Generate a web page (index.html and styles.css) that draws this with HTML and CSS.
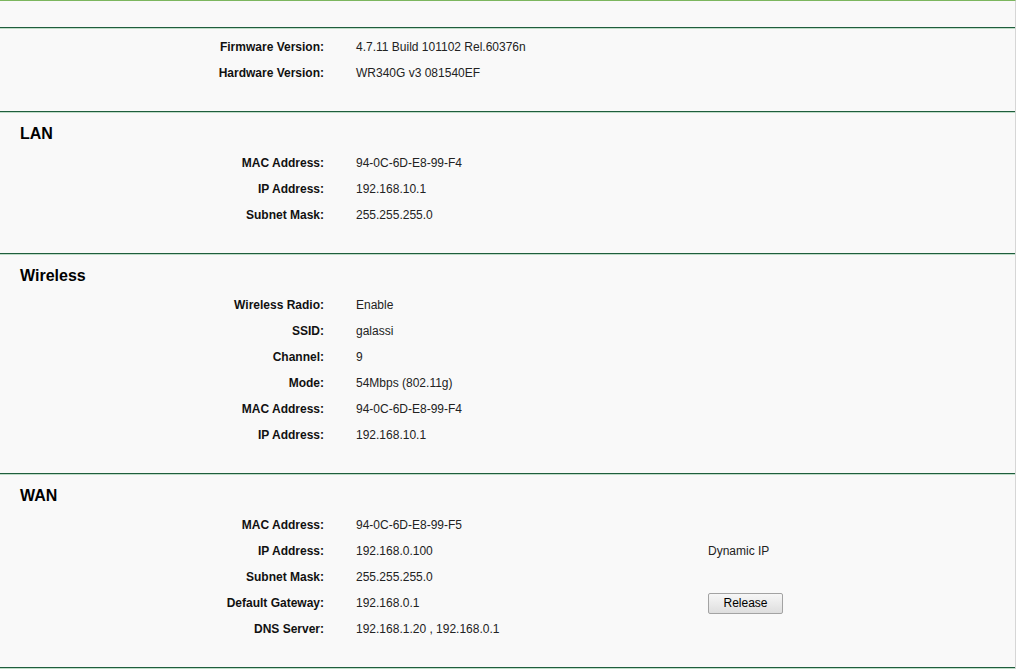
FILE: index.html
```html
<!DOCTYPE html>
<html>
<head>
<meta charset="utf-8">
<title>Status</title>
<link rel="stylesheet" href="styles.css">
</head>
<body>
<div class="page">
  <div class="topgap"></div>

  <div class="block first">
    <div class="row"><span class="label">Firmware Version:</span><span class="value">4.7.11 Build 101102 Rel.60376n</span></div>
    <div class="row"><span class="label">Hardware Version:</span><span class="value">WR340G v3 081540EF</span></div>
  </div>

  <div class="block">
    <div class="title">LAN</div>
    <div class="row"><span class="label">MAC Address:</span><span class="value">94-0C-6D-E8-99-F4</span></div>
    <div class="row"><span class="label">IP Address:</span><span class="value">192.168.10.1</span></div>
    <div class="row"><span class="label">Subnet Mask:</span><span class="value">255.255.255.0</span></div>
  </div>

  <div class="block">
    <div class="title">Wireless</div>
    <div class="row"><span class="label">Wireless Radio:</span><span class="value">Enable</span></div>
    <div class="row"><span class="label">SSID:</span><span class="value">galassi</span></div>
    <div class="row"><span class="label">Channel:</span><span class="value">9</span></div>
    <div class="row"><span class="label">Mode:</span><span class="value">54Mbps (802.11g)</span></div>
    <div class="row"><span class="label">MAC Address:</span><span class="value">94-0C-6D-E8-99-F4</span></div>
    <div class="row"><span class="label">IP Address:</span><span class="value">192.168.10.1</span></div>
  </div>

  <div class="block">
    <div class="title">WAN</div>
    <div class="row"><span class="label">MAC Address:</span><span class="value">94-0C-6D-E8-99-F5</span></div>
    <div class="row"><span class="label">IP Address:</span><span class="value">192.168.0.100</span><span class="extra">Dynamic IP</span></div>
    <div class="row"><span class="label">Subnet Mask:</span><span class="value">255.255.255.0</span></div>
    <div class="row"><span class="label">Default Gateway:</span><span class="value">192.168.0.1</span><span class="extra"><button class="btn">Release</button></span></div>
    <div class="row"><span class="label">DNS Server:</span><span class="value">192.168.1.20 , 192.168.0.1</span></div>
  </div>

  <div class="block last"></div>
</div>
</body>
</html>
```

FILE: styles.css
```css
html, body {
    margin: 0;
    padding: 0;
    background-color: #ffffff;
}
body {
    font-family: "Liberation Sans", Arial, sans-serif;
    font-size: 12px;
    color: #000;
}
.page {
    width: 1015px;
    height: 669px;
    background-color: #f9f9f9;
    border-top: 1px solid #7cb65e;
    border-right: 1px solid #d6d6d6;
    overflow: hidden;
}
.topgap {
    height: 26px;
}
.block {
    border-top: 1px solid #1f5e3d;
    box-shadow: inset 0 1px 0 #bfdcc8;
    padding: 1px 0 26px 0;
}
.block.first {
    padding-top: 5px;
}
.block.last {
    padding: 1px 0 0 0;
}
.title {
    font-size: 16px;
    font-weight: bold;
    line-height: 20px;
    padding: 11px 0 5px 20px;
}
.row {
    display: grid;
    grid-template-columns: 324px 384px 1fr;
    box-sizing: border-box;
    height: 26px;
    padding-top: 2px;
    align-items: center;
}
.label {
    font-weight: bold;
    text-align: right;
    color: #111;
}
.value {
    padding-left: 32px;
    color: #222;
}
.extra {
    color: #222;
}
.btn {
    font-family: "Liberation Sans", Arial, sans-serif;
    font-size: 12px;
    color: #000;
    height: 21px;
    width: 75px;
    padding: 0;
    border: 1px solid #a3a3a3;
    border-radius: 2px;
    background: linear-gradient(#f7f7f7, #dedede);
}
```
